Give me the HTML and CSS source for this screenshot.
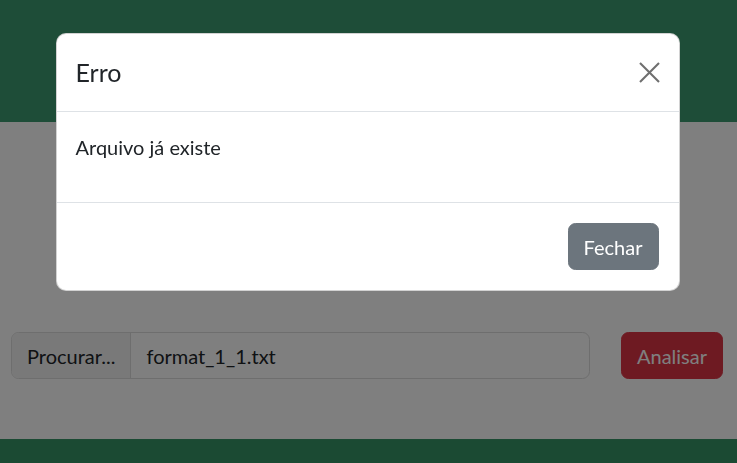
FILE: index.html
```html
<!DOCTYPE html>
<html lang="pt">
<head>
<meta charset="utf-8">
<title>Erro</title>
<link rel="stylesheet" href="styles.css">
</head>
<body>
<div class="page">
  <header class="site-header"></header>
  <main class="main">
    <form class="upload-row">
      <div class="input-group">
        <span class="browse">Procurar...</span>
        <span class="file-name">format_1_1.txt</span>
      </div>
      <button type="button" class="btn-danger">Analisar</button>
    </form>
  </main>
  <footer class="site-footer"></footer>
</div>

<div class="backdrop"></div>
<div class="modal">
  <div class="modal-dialog">
    <div class="modal-content">
      <div class="modal-header">
        <h5 class="modal-title">Erro</h5>
        <button type="button" class="btn-close" aria-label="Close">
          <svg width="21" height="21" viewBox="0 0 21 21"><path d="M1 1 L20 20 M20 1 L1 20" stroke="#6f6f6f" stroke-width="2.1" fill="none"/></svg>
        </button>
      </div>
      <div class="modal-body">
        <p>Arquivo já existe</p>
      </div>
      <div class="modal-footer">
        <button type="button" class="btn-secondary">Fechar</button>
      </div>
    </div>
  </div>
</div>
</body>
</html>
```

FILE: styles.css
```css
* { box-sizing: border-box; }
html, body { margin: 0; padding: 0; }
body {
  font-family: Lato, "Noto Sans", sans-serif;
  font-size: 20px;
  line-height: 30px;
  color: #212529;
  background: #fff;
  overflow: hidden;
  height: 463px;
}
.page { display: flex; flex-direction: column; }
.site-header { height: 122px; background: #3d9a70; }
.main { height: 317px; padding: 210px 14px 0 11px; }
.upload-row { display: flex; gap: 31px; align-items: flex-start; }
.input-group {
  flex: 1;
  display: flex;
  border: 1px solid #dcdcdc;
  border-radius: 7.5px;
  overflow: hidden;
  height: 47px;
}
.browse {
  background: #f3f3f3;
  border-right: 1px solid #dcdcdc;
  padding: 7.5px 15px;
  white-space: nowrap;
}
.file-name { padding: 7.5px 15px; white-space: nowrap; }
.btn-danger {
  font: inherit;
  background: #dc3545;
  color: #fff;
  border: 1px solid #dc3545;
  border-radius: 7.5px;
  padding: 7.5px 15px;
  height: 47px;
}
.site-footer { height: 24px; background: #369466; }

.backdrop {
  position: fixed;
  inset: 0;
  background: rgba(0,0,0,.5);
}
.modal {
  position: fixed;
  inset: 0;
  padding-right: 2px;
}
.modal-dialog {
  width: 624px;
  margin: 33px auto 0;
}
.modal-content {
  background: #fff;
  border: 1px solid rgba(0,0,0,.175);
  border-radius: 10px;
}
.modal-header {
  display: flex;
  align-items: center;
  justify-content: space-between;
  padding: 20px 19px 20px 19px;
  border-bottom: 1px solid #dee2e6;
}
.modal-title {
  margin: 0;
  font-size: 25px;
  line-height: 37px;
  font-weight: 400;
}
.btn-close {
  background: none;
  border: 0;
  padding: 0;
  width: 21px;
  height: 21px;
  display: flex;
}
.modal-body { padding: 20px 19px; }
.modal-body p { margin: 0 0 20px; }
.modal-footer {
  display: flex;
  justify-content: flex-end;
  padding: 15px;
  border-top: 1px solid #dee2e6;
}
.btn-secondary {
  font: inherit;
  margin: 5px;
  background: #6c757d;
  color: #fff;
  border: 1px solid #6c757d;
  border-radius: 7.5px;
  padding: 7.5px 15px;
  height: 47px;
}
```
